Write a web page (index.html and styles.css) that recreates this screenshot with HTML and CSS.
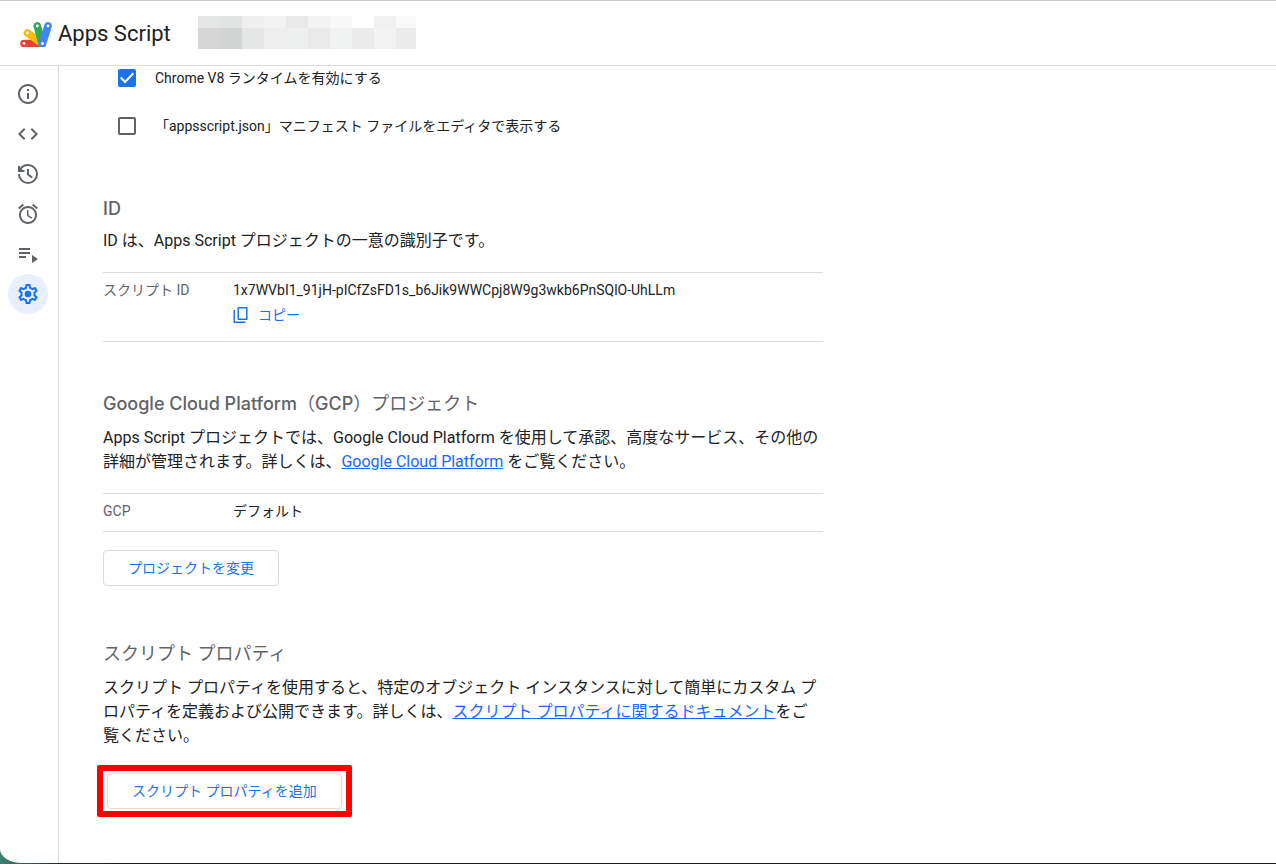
FILE: index.html
```html
<!DOCTYPE html>
<html lang="ja">
<head>
<meta charset="utf-8">
<meta name="viewport" content="width=device-width, initial-scale=1">
<title>Apps Script</title>
<link rel="stylesheet" href="styles.css">
</head>
<body>
<div class="app">
  <header class="header">
    <svg class="logo" viewBox="0 0 32 28" aria-hidden="true">
      <g fill="none" stroke-width="7.6" stroke-linecap="round">
        <path stroke="#ea4335" d="M4 24.500h18"/>
        <path stroke="#fbbc04" d="M7.500 14L22 24.500"/>
        <path stroke="#34a853" d="M17.300 7L22 24.500"/>
        <path stroke="#4285f4" d="M28 7l-5.500 17.500"/>
      </g>
      <g fill="#fff">
        <circle cx="4" cy="24.500" r="1.400"/><circle cx="7.500" cy="14" r="1.400"/>
        <circle cx="17.300" cy="7" r="1.400"/><circle cx="28" cy="7" r="1.400"/>
        <circle cx="22.500" cy="24.500" r="1.400"/>
      </g>
    </svg>
    <span class="brand">Apps Script</span>
    <svg class="project-name" viewBox="0 0 218 33" shape-rendering="crispEdges" aria-hidden="true">
      <path fill="#e4e7e6" d="M0 0h22v12H0z"/><path fill="#e1e4e3" d="M22 0h22v12H22z"/>
      <path fill="#efefef" d="M44 0h22v12H44z"/><path fill="#f3f3f3" d="M66 0h22v12H66z"/>
      <path fill="#e9e9e9" d="M88 0h22v12H88z"/><path fill="#f3f3f3" d="M110 0h22v12h-22z"/>
      <path fill="#f8f8f8" d="M132 0h22v12h-22z"/><path fill="#f0f0f0" d="M176 0h22v12h-22z"/>
      <path fill="#f9f9f9" d="M198 0h20v12h-20z"/>
      <path fill="#d6d6d6" d="M0 12h22v21H0z"/><path fill="#d2d4d3" d="M22 12h22v21H22z"/>
      <path fill="#e4e7e6" d="M44 12h22v21H44z"/><path fill="#efefef" d="M66 12h22v21H66z"/>
      <path fill="#edf0ef" d="M88 12h22v21H88z"/><path fill="#eaeaea" d="M110 12h22v21h-22z"/>
      <path fill="#f0f3f2" d="M132 12h22v21h-22z"/><path fill="#ececec" d="M154 12h22v21h-22z"/>
      <path fill="#f3f3f3" d="M176 12h22v21h-22z"/><path fill="#ececec" d="M198 12h20v21h-20z"/>
    </svg>
  </header>

  <div class="body">
    <nav class="rail" aria-label="メニュー">
      <button class="rail-button" type="button" aria-label="概要">
        <svg class="icon" viewBox="0 0 24 24"><path d="M11 7h2v2h-2zm0 4h2v6h-2zm1-9C6.480 2 2 6.480 2 12s4.480 10 10 10 10-4.480 10-10S17.520 2 12 2zm0 18c-4.410 0-8-3.590-8-8s3.590-8 8-8 8 3.590 8 8-3.590 8-8 8z"/></svg>
      </button>
      <button class="rail-button" type="button" aria-label="エディタ">
        <svg class="icon" viewBox="0 0 24 24"><path d="M9.400 16.600L4.800 12l4.600-4.600L8 6l-6 6 6 6zm5.200 0l4.600-4.600-4.600-4.600L16 6l6 6-6 6z"/></svg>
      </button>
      <button class="rail-button" type="button" aria-label="プロジェクトの履歴">
        <svg class="icon" viewBox="0 0 24 24"><path fill="none" stroke="currentColor" stroke-width="2" d="M3 12a9 9 0 1 0 9-9c-3.300 0-6.200 1.800-7.800 4.500M3 4v5h5.500M12 7v5.500l4.200 3"/><path d="M3 4.500L7.500 9H3z"/></svg>
      </button>
      <button class="rail-button" type="button" aria-label="トリガー">
        <svg class="icon" viewBox="0 0 24 24"><path d="M12.500 8H11v6l4.750 2.850.75-1.230-4-2.370zm4.837-6.190l4.607 3.845-1.280 1.535-4.610-3.843zm-10.674 0l1.282 1.536L3.337 7.190l-1.280-1.536zM12 4c-4.970 0-9 4.030-9 9s4.030 9 9 9 9-4.030 9-9-4.030-9-9-9zm0 16c-3.860 0-7-3.140-7-7s3.140-7 7-7 7 3.140 7 7-3.140 7-7 7z"/></svg>
      </button>
      <button class="rail-button" type="button" aria-label="実行数">
        <svg class="icon" viewBox="0 0 24 24"><path d="M3 6h11v2H3zM3 10h11v2H3zM3 14h7v2H3zM16 13l6 4-6 4z"/></svg>
      </button>
      <button class="rail-button rail-button-active" type="button" aria-label="プロジェクトの設定" aria-current="page">
        <svg class="icon" viewBox="0 0 24 24"><path d="M19.430 12.980c.04-.32.07-.64.07-.98s-.03-.66-.07-.98l2.110-1.650c.19-.15.24-.42.12-.64l-2-3.460c-.12-.22-.39-.3-.61-.22l-2.490 1c-.52-.4-1.080-.73-1.690-.98l-.38-2.650C14.460 2.180 14.250 2 14 2h-4c-.25 0-.46.18-.49.42l-.38 2.650c-.61.25-1.170.59-1.690.98l-2.490-1c-.23-.09-.49 0-.61.22l-2 3.460c-.13.22-.07.49.12.64l2.110 1.650c-.04.32-.07.65-.07.98s.03.66.07.98l-2.110 1.650c-.19.15-.24.42-.12.64l2 3.460c.12.22.39.3.61.22l2.490-1c.52.4 1.080.73 1.690.98l.38 2.650c.03.24.24.42.49.42h4c.25 0 .46-.18.49-.42l.38-2.650c.61-.25 1.170-.59 1.690-.98l2.490 1c.23.09.49 0 .61-.22l2-3.460c.12-.22.07-.49-.12-.64zm-1.980-1.710c.04.31.05.52.05.73s-.02.43-.05.73l-.14 1.130.89.7 1.080.84-.7 1.210-1.270-.51-1.040-.42-.9.68c-.43.32-.84.56-1.250.73l-1.060.43-.16 1.130-.2 1.350h-1.400l-.35-2.480-1.060-.43c-.43-.18-.83-.41-1.230-.71l-.91-.7-1.060.43-1.270.51-.7-1.210 1.970-1.540-.14-1.130c-.03-.31-.05-.54-.05-.74s.02-.43.05-.73l.14-1.130-1.970-1.540.7-1.210 2.310.93.9-.68c.43-.32.84-.56 1.250-.73l1.060-.43.36-2.480h1.390l.35 2.480 1.060.43c.43.18.83.41 1.230.71l.91.7 2.330-.94.7 1.210-1.970 1.540z"/><circle cx="12" cy="12" r="3.300"/></svg>
      </button>
    </nav>

    <main class="content">
      <div class="options">
        <label class="option"><input class="checkbox" type="checkbox" checked><span>Chrome V8 ランタイムを有効にする</span></label>
        <label class="option"><input class="checkbox" type="checkbox"><span>「appsscript.json」マニフェスト ファイルをエディタで表示する</span></label>
      </div>

      <section class="section">
        <h2 class="title"><span class="title-latin">ID</span></h2>
        <p class="text">ID は、Apps Script プロジェクトの一意の識別子です。</p>
        <dl class="details details-tall">
          <dt class="term">スクリプト ID</dt>
          <dd class="value">
            <span>1x7WVbI1_91jH-pICfZsFD1s_b6Jik9WWCpj8W9g3wkb6PnSQlO-UhLLm</span>
            <button class="copy" type="button">
              <svg class="copy-icon" viewBox="0 0 16 18" aria-hidden="true"><path fill="none" stroke="currentColor" stroke-width="1.500" stroke-linejoin="round" stroke-linecap="round" d="M5.200 1.700h8.600v11.600H5.200zM1.200 4.500v11.800h10.800"/></svg>
              コピー
            </button>
          </dd>
        </dl>
      </section>

      <section class="section">
        <h2 class="title"><span class="title-latin">Google Cloud Platform</span>（<span class="title-latin">GCP</span>）プロジェクト</h2>
        <p class="text">Apps Script プロジェクトでは、Google Cloud Platform を使用して承認、高度なサービス、その他の詳細が管理されます。詳しくは、<a class="link" href="#gcp">Google Cloud Platform</a> をご覧ください。</p>
        <dl class="details">
          <dt class="term">GCP</dt>
          <dd class="value">デフォルト</dd>
        </dl>
        <button class="button" type="button">プロジェクトを変更</button>
      </section>

      <section class="section">
        <h2 class="title">スクリプト プロパティ</h2>
        <p class="text">スクリプト プロパティを使用すると、特定のオブジェクト インスタンスに対して簡単にカスタム プロパティを定義および公開できます。詳しくは、<a class="link" href="#properties">スクリプト プロパティに関するドキュメント</a>をご覧ください。</p>
        <div class="highlight"><button class="button" type="button">スクリプト プロパティを追加</button></div>
      </section>
    </main>
  </div>
</div>
</body>
</html>
```
FILE: styles.css
```css
* {
  box-sizing: border-box;
}

body {
  margin: 0;
  min-height: 100vh;
  padding-bottom: 1px;
  display: flex;
  background: linear-gradient(90deg, #3d8070, #2f6258 24px, #1c2a28 60px, #1c1c1c 120px);
  color: #202124;
  font-family: Roboto, "Noto Sans CJK JP", sans-serif;
  font-size: 14px;
  line-height: 20px;
}

h2, p, dl, dd {
  margin: 0;
}

button {
  font: inherit;
  cursor: pointer;
}

.app {
  flex: 1;
  display: flex;
  flex-direction: column;
  background: #fff;
  border-top: 1px solid #c8c8c8;
  border-bottom-left-radius: 22px 14px;
  overflow: hidden;
}

.header {
  display: flex;
  align-items: center;
  height: 65px;
  padding-left: 20px;
  border-bottom: 1px solid #dadce0;
}

.logo {
  width: 32px;
  height: 28px;
}

.brand {
  margin: 0 27px 0 6px;
  padding-top: 2px;
  font-size: 22px;
  line-height: 28px;
}

.project-name {
  width: 218px;
  height: 33px;
  margin-bottom: 1px;
}

.body {
  flex: 1;
  display: flex;
}

.rail {
  flex: none;
  display: flex;
  flex-direction: column;
  padding: 8px 10px 8px 8px;
  border-right: 1px solid #dadce0;
}

.rail-button {
  display: grid;
  place-items: center;
  width: 40px;
  height: 40px;
  padding: 0;
  border: 0;
  border-radius: 50%;
  background: none;
  color: #5f6368;
}

.rail-button-active {
  background: #e8f0fe;
  color: #1a73e8;
}

.icon {
  width: 24px;
  height: 24px;
  fill: currentColor;
}

.content {
  flex: 1;
  max-width: 764px;
  padding: 0 0 40px 44px;
}

.options {
  display: flex;
  flex-direction: column;
  gap: 24px;
  padding-left: 15px;
  margin-bottom: 59px;
}

.option {
  display: flex;
  align-items: center;
  gap: 19px;
  height: 24px;
}

.checkbox {
  appearance: none;
  display: grid;
  place-items: center;
  width: 18px;
  height: 18px;
  margin: 0;
  border: 2px solid #5f6368;
  border-radius: 2px;
}

.checkbox:checked {
  border-color: #1a73e8;
  background: #1a73e8;
}

.checkbox:checked::before {
  content: "";
  width: 14px;
  height: 12px;
  background: #fff;
  clip-path: polygon(0 52%, 10% 40%, 36% 70%, 90% 4%, 100% 16%, 36% 96%);
}

.section + .section {
  margin-top: 50px;
}

.title {
  color: #5f6368;
  font-size: 18px;
  font-weight: 400;
  line-height: 24px;
}

.title-latin {
  font-family: Inter, Roboto, sans-serif;
  font-weight: 500;
}

.text {
  margin-top: 8px;
  font-size: 16px;
  line-height: 24px;
}

.section + .section .text {
  margin-top: 10px;
}

.link {
  color: #1967ff;
}

.details {
  display: grid;
  grid-template-columns: 130px 1fr;
  margin-top: 19px;
  padding: 7px 0 10px;
  border: solid #dadce0;
  border-width: 1px 0;
}

.details-tall {
  padding-bottom: 16px;
}

.term {
  color: #5f6368;
}

.value {
  display: flex;
  flex-direction: column;
  align-items: flex-start;
  gap: 5px;
}

.copy {
  display: flex;
  align-items: center;
  gap: 9px;
  padding: 0;
  border: 0;
  background: none;
  color: #1a73e8;
}

.copy-icon {
  width: 16px;
  height: 18px;
}

.button {
  display: block;
  height: 36px;
  padding: 0 24px;
  border: 1px solid #dadce0;
  border-radius: 4px;
  background: #fff;
  color: #1a73e8;
}

.details + .button {
  margin: 18px 0 56px;
}

.highlight {
  width: fit-content;
  margin: 17px 0 0 -6px;
  padding: 2px 4px;
  border: 6px solid #f00;
  border-radius: 2px;
}
```
